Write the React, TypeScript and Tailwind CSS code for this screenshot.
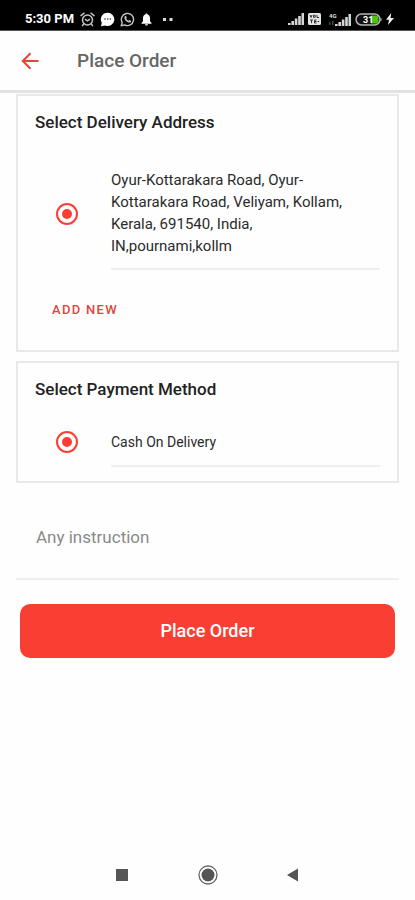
import React, { useState } from 'react'

interface OptionProps {
  id: string
  name: string
  children: React.ReactNode
  className?: string
}

function Option({ id, name, children, className = '' }: OptionProps) {
  return (
    <div className="flex items-center">
      <input
        id={id}
        type="radio"
        name={name}
        defaultChecked
        className="ml-[38px] mr-[33px] size-[22px] shrink-0 appearance-none rounded-full border-2 border-[#f93f34] bg-clip-content p-1 checked:bg-[#f93f34]"
      />
      <label
        htmlFor={id}
        className={`mr-[17px] flex-1 border-b-2 border-[#efefef] text-[#2b2b2b] ${className}`}
      >
        {children}
      </label>
    </div>
  )
}

function Signal() {
  return (
    <svg width="16" height="12" viewBox="0 0 16 12" fill="#d6d6d6" aria-hidden="true">
      <path d="M0 10h2.600v2H0zM3.400 8h2.600v4H3.400zM6.800 5.500h2.600V12H6.800zM10.200 3h2.600v9h-2.600zM13.500 0H16v12h-2.500z" />
    </svg>
  )
}

function StatusBar() {
  return (
    <div className="flex h-[31px] items-center justify-between border-b border-[#555] bg-black pl-[25px] pr-[21px] pt-2 text-white">
      <div className="flex items-center">
        <span className="mr-[6px] text-[13px] font-bold leading-4">5:30 PM</span>
        <div className="flex items-center gap-[5px]">
          {/* alarm */}
          <svg width="15" height="15" viewBox="0 0 15 15" fill="none" stroke="#c4c4c4" strokeWidth="1.5" aria-hidden="true">
            <circle cx="7.5" cy="8" r="5" />
            <path d="M1 3.6 4 1.2M14 3.6 11 1.2M3.8 11.8 2.5 13.6M11.2 11.8l1.3 1.8" strokeLinecap="round" />
            <path d="M5 7.2l2.5 1.6L10 7.2" />
          </svg>
          {/* chat bubble */}
          <svg width="15" height="15" viewBox="0 0 15 15" aria-hidden="true">
            <path d="M7.7.8a6.6 6.6 0 1 1-2.5 12.7L1 14.2l.8-3.4A6.6 6.6 0 0 1 7.7.8Z" fill="#fff" />
            <path d="M4.3 7h1.4M7 7h1.4M9.7 7h1.4" stroke="#555" strokeWidth="1.3" />
          </svg>
          {/* phone bubble */}
          <svg width="15" height="15" viewBox="0 0 15 15" aria-hidden="true">
            <path d="M1.2 13.8 2.2 10.6A6.1 6.1 0 1 1 4.6 12.9Z" fill="none" stroke="#c4c4c4" strokeWidth="1.4" strokeLinejoin="round" />
            <path d="M5.2 4.1c.5-.4.9-.2 1.1.3l.5 1.1-.6.9c.6 1.1 1.4 1.8 2.5 2.3l.8-.7 1.4.7c.4.3.3.9-.1 1.3-.7.8-1.8.8-3.2.1-1.4-.7-2.5-1.8-3-3.3-.4-1.2 0-2.2.6-2.7Z" fill="#c4c4c4" />
          </svg>
          {/* bell */}
          <svg width="13" height="13" viewBox="0 0 13 13" fill="#fff" aria-hidden="true">
            <path d="M6.5.5c.7 0 1.1.4 1.1 1.1 1.7.5 2.4 1.9 2.4 3.7v2.900l1.500 1.700v.8h-10v-.8L3 8.200V5.300c0-1.800.7-3.200 2.400-3.700 0-.7.4-1.100 1.100-1.100ZM5 11.200h3c0 .9-.6 1.400-1.500 1.400S5 12.100 5 11.200Z" />
          </svg>
        </div>
        <svg className="ml-[10px]" width="10" height="3" viewBox="0 0 10 3" fill="#ddd" aria-hidden="true">
          <path d="M0 0h3v3H0zM6.500 0h3v3h-3z" />
        </svg>
      </div>

      <div className="flex items-center gap-1">
        <Signal />
        {/* volte */}
        <svg width="13" height="12" viewBox="0 0 13 12" aria-hidden="true">
          <rect width="13" height="12" rx="1.5" fill="#e4e4e4" />
          <path d="M2 2l1 2.500L4 2M5.500 2.300h1.700v2H5.500zM9 2v2.500h2M2 7h3M3.500 7v3.200M8.500 7H6.500v3h2M6.500 8.500h2M9.500 8.500h1.700" fill="none" stroke="#333" />
        </svg>
        <div className="ml-1 flex items-end">
          <svg width="6" height="14" viewBox="0 0 6 14" overflow="visible" aria-hidden="true">
            <text x="0" y="6" fontSize="6" fontWeight="700" fill="#ddd">4G</text>
            <path d="M0 10h1.500v3H0zM3 9h1.500v4H3z" fill="#444" />
          </svg>
          <Signal />
        </div>
        {/* battery */}
        <svg width="27" height="13" viewBox="0 0 27 13" aria-hidden="true">
          <rect x="1" y="1" width="24" height="11" rx="5.500" fill="#111" stroke="#b5b5b5" strokeWidth="1.500" />
          <path d="M16 2.500h4.500a3 3 0 0 1 3 3v2a3 3 0 0 1-3 3H16z" fill="#4cc417" />
          <path d="M26 5v3" stroke="#b5b5b5" />
          <text x="8" y="10" fontSize="9" fontWeight="700" fill="#fff">31</text>
        </svg>
        <svg width="8" height="12" viewBox="0 0 8 12" fill="#eee" aria-hidden="true">
          <path d="M5.200 0 0 6.800h3L2 12l6-7H4.600z" />
        </svg>
      </div>
    </div>
  )
}

function Header() {
  return (
    <header className="flex h-[62px] items-center border-b-[3px] border-[#e2e2e2] pl-[21px]">
      <button type="button" aria-label="Back" className="mr-[38px]">
        <svg width="18" height="18" viewBox="0 0 18 18" fill="none" stroke="#ea4238" strokeWidth="2" aria-hidden="true">
          <path d="M17.500 9H2M9.500 1.300 1.800 9l7.700 7.700" />
        </svg>
      </button>
      <h1 className="text-[19px] font-medium leading-6 text-[#666]">Place Order</h1>
    </header>
  )
}

function NavBar() {
  return (
    <nav className="mt-auto flex h-[50px] items-center justify-center gap-[66px]">
      <button type="button" aria-label="Recent apps">
        <svg width="20" height="20" viewBox="0 0 20 20" aria-hidden="true">
          <rect x="4" y="4" width="12" height="12" fill="#555" />
        </svg>
      </button>
      <button type="button" aria-label="Home">
        <svg width="20" height="20" viewBox="0 0 20 20" aria-hidden="true">
          <circle cx="10" cy="10" r="9" fill="none" stroke="#666" strokeWidth="1.300" />
          <circle cx="10" cy="10" r="6.500" fill="#555" />
        </svg>
      </button>
      <button type="button" aria-label="Back">
        <svg width="20" height="20" viewBox="0 0 20 20" aria-hidden="true">
          <path d="M3 10 14 3.500v13z" fill="#555" />
        </svg>
      </button>
    </nav>
  )
}

export default function App() {
  const [instruction, setInstruction] = useState('')

  return (
    <div className="flex min-h-screen flex-col bg-[#fefefe] font-[Roboto,sans-serif]">
      <StatusBar />
      <Header />

      <main className="px-4 pt-px">
        <section className="border-2 border-[#e8e8e8] pb-7">
          <h2 className="px-[17px] pt-[14px] text-[17px] font-medium leading-6 text-[#222]">
            Select Delivery Address
          </h2>
          <div className="pt-6">
            <Option id="address" name="address" className="pb-[11px] pr-6 pt-[11px] text-[15px] leading-[22px]">
              Oyur-Kottarakara Road, Oyur-Kottarakara Road, Veliyam, Kollam, Kerala, 691540, India, IN,pournami,kollm
            </Option>
          </div>
          <button
            type="button"
            className="ml-[34px] mt-7 block text-[13px] font-medium leading-6 tracking-widest text-[#e5443d]"
          >
            ADD NEW
          </button>
        </section>

        <section className="mt-[9px] border-2 border-[#e8e8e8] pb-[14px]">
          <h2 className="px-[17px] pt-[14px] text-[17px] font-medium leading-6 text-[#222]">
            Select Payment Method
          </h2>
          <div className="pt-[15px]">
            <Option id="cod" name="payment" className="pb-[11px] pt-[14px] text-sm leading-6">
              Cash On Delivery
            </Option>
          </div>
        </section>

        <textarea
          aria-label="Any instruction"
          placeholder="Any instruction"
          rows={1}
          value={instruction}
          onChange={(e) => setInstruction(e.target.value)}
          className="mt-6 block w-full resize-none border-b-2 border-[#efefef] px-5 pb-[29px] pt-[18px] text-[17px] leading-6 outline-none placeholder:text-[#8a8a8a]"
        />

        <div className="px-1">
          <button
            type="button"
            className="mt-6 h-[54px] w-full rounded-[10px] bg-[#f93f34] text-lg font-medium text-white"
          >
            Place Order
          </button>
        </div>
      </main>

      <NavBar />
    </div>
  )
}
